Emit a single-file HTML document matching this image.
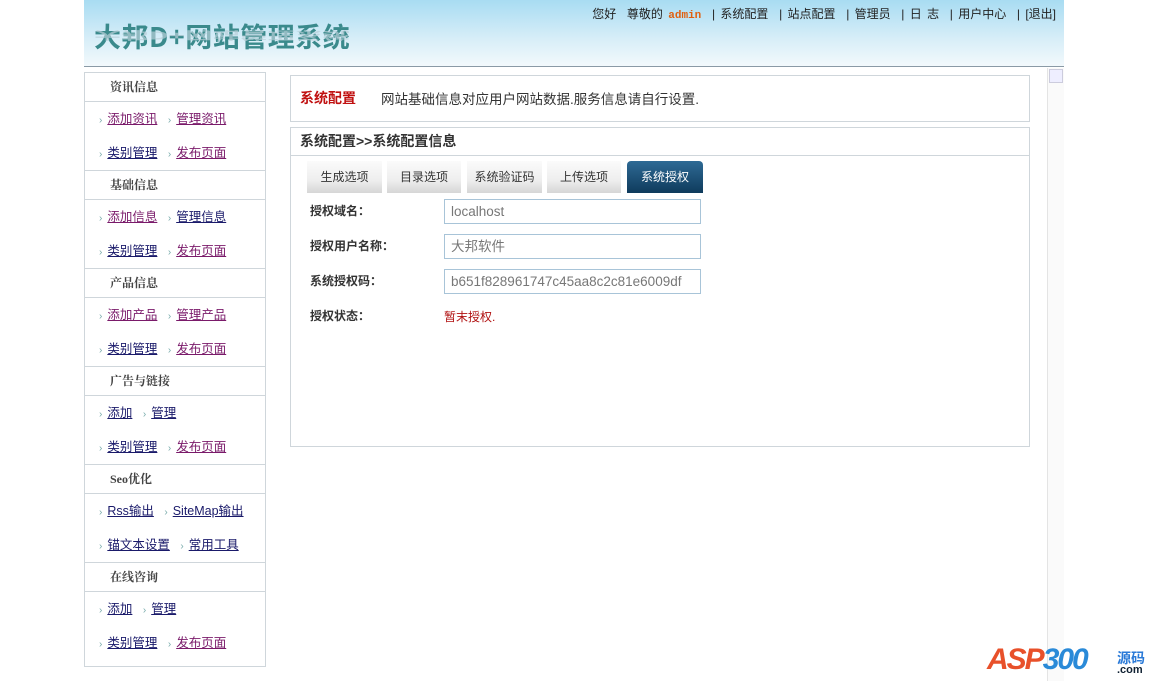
<!DOCTYPE html><html><head><meta charset="utf-8"><style>
*{margin:0;padding:0;box-sizing:border-box}
body{width:1156px;height:681px;background:#fff;font-family:"Liberation Sans","Noto Sans CJK SC",sans-serif;font-size:12px;color:#333;position:relative;overflow:hidden}
.hd{position:absolute;left:84px;top:0;width:980px;height:67px;background:linear-gradient(#a8dcf2,#d8eef8 60%,#f2f9fc);border-bottom:1px solid #8a9aa6}
.logo{position:absolute;left:10px;top:16px;font-size:27px;font-weight:bold;color:#3a8a8c;font-family:"Noto Sans CJK SC",sans-serif;letter-spacing:0.5px}
.refl{position:absolute;left:10px;top:44px;font-size:27px;font-weight:bold;color:#b8cfd8;transform:scaleY(-0.4);transform-origin:top;opacity:.7;font-family:"Noto Sans CJK SC",sans-serif;letter-spacing:0.5px}
.top{position:absolute;right:8px;top:5px;font-size:12px;color:#222;word-spacing:2px}
.top .a{color:#e06010;font-weight:bold;font-family:"Liberation Mono",monospace;font-size:11px}
.side{position:absolute;left:84px;top:72px;width:182px;height:595px;border:1px solid #cfd6db;border-top:none}
.sh{height:30px;line-height:28px;padding-left:25px;font-weight:bold;color:#444;border-top:1px solid #cfd6db;border-bottom:1px solid #cfd6db;font-family:"Liberation Serif","Noto Serif CJK SC",serif}
.sr{height:34px;line-height:34px;padding-left:14px;white-space:nowrap;font-size:12.5px}
.sr a{color:#1a1a6a;text-decoration:underline;margin-right:7px}
.sr a.v{color:#7a1a6a}
.sr i{font-style:normal;color:#7aa;font-size:10px;margin-right:5px}
.box1{position:absolute;left:290px;top:75px;width:740px;height:47px;border:1px solid #cfd6db}
.box1 b{position:absolute;left:9px;top:12px;font-size:14px;color:#c01010}
.box1 span{position:absolute;left:90px;top:12px;font-size:13.5px;color:#333}
.box2{position:absolute;left:290px;top:127px;width:740px;height:320px;border:1px solid #cfd6db}
.t2{height:28px;line-height:27px;padding-left:9px;font-size:14px;font-weight:bold;color:#333;border-bottom:1px solid #cfd6db}
.tab{position:absolute;top:33px;height:32px;line-height:32px;text-align:center;color:#333;background:linear-gradient(#fbfbfb,#eee 60%,#d6d6d6);font-size:12px}
.tab.on{background:linear-gradient(#2e6a95,#0f3b5c);color:#fff;border-radius:4px 4px 0 0}
.lb{position:absolute;left:19px;font-weight:bold;color:#333;font-size:12px}
.in{position:absolute;left:153px;width:257px;height:25px;border:1px solid #a8c4d8;line-height:23px;padding-left:6px;color:#777;font-size:13.5px}
</style></head><body>
<div class="hd"><div class="logo">大邦D+网站管理系统</div><div class="refl">大邦D+网站管理系统</div>
<div class="top">您好 &nbsp;尊敬的 <span class="a">admin</span> &nbsp;| 系统配置 &nbsp;| 站点配置 &nbsp;| 管理员 &nbsp;| 日 志 &nbsp;| 用户中心 &nbsp;| [退出]</div></div>
<div style="position:absolute;left:1047px;top:68px;width:17px;height:613px;border-left:1px solid #e4e4e4;background:#fafafa"><div style="margin:1px;height:14px;border:1px solid #ccd;background:#eef"></div></div>
<div class="side">
<div class="sh">资讯信息</div><div class="sr"><i>›</i><a class="v">添加资讯</a> <i>›</i><a class="v">管理资讯</a></div><div class="sr"><i>›</i><a>类别管理</a> <i>›</i><a class="v">发布页面</a></div>
<div class="sh">基础信息</div><div class="sr"><i>›</i><a class="v">添加信息</a> <i>›</i><a>管理信息</a></div><div class="sr"><i>›</i><a>类别管理</a> <i>›</i><a class="v">发布页面</a></div>
<div class="sh">产品信息</div><div class="sr"><i>›</i><a class="v">添加产品</a> <i>›</i><a class="v">管理产品</a></div><div class="sr"><i>›</i><a>类别管理</a> <i>›</i><a class="v">发布页面</a></div>
<div class="sh">广告与链接</div><div class="sr"><i>›</i><a>添加</a> <i>›</i><a>管理</a></div><div class="sr"><i>›</i><a>类别管理</a> <i>›</i><a class="v">发布页面</a></div>
<div class="sh">Seo优化</div><div class="sr"><i>›</i><a>Rss输出</a> <i>›</i><a>SiteMap输出</a></div><div class="sr"><i>›</i><a>锚文本设置</a> <i>›</i><a>常用工具</a></div>
<div class="sh">在线咨询</div><div class="sr"><i>›</i><a>添加</a> <i>›</i><a>管理</a></div><div class="sr"><i>›</i><a>类别管理</a> <i>›</i><a class="v">发布页面</a></div>
</div>
<div class="box1"><b>系统配置</b><span>网站基础信息对应用户网站数据.服务信息请自行设置.</span></div>
<div class="box2"><div class="t2">系统配置&gt;&gt;系统配置信息</div>
<div class="tab" style="left:16px;width:75px">生成选项</div>
<div class="tab" style="left:96px;width:74px">目录选项</div>
<div class="tab" style="left:176px;width:75px">系统验证码</div>
<div class="tab" style="left:256px;width:74px">上传选项</div>
<div class="tab on" style="left:336px;width:76px">系统授权</div>
<div class="lb" style="top:74px">授权域名：</div><div class="in" style="top:71px">localhost</div>
<div class="lb" style="top:109px">授权用户名称：</div><div class="in" style="top:106px">大邦软件</div>
<div class="lb" style="top:144px">系统授权码：</div><div class="in" style="top:141px">b651f828961747c45aa8c2c81e6009df</div>
<div class="lb" style="top:179px">授权状态：</div><div style="position:absolute;left:153px;top:180px;color:#b01010">暂末授权.</div>
</div>
<div style="position:absolute;left:987px;top:643px;font-size:30px;font-weight:bold;font-style:italic;color:#e8502a;letter-spacing:-2px">ASP<span style="color:#2a8ad8">300</span></div>
<div style="position:absolute;left:1117px;top:648px;font-size:14px;font-weight:bold;color:#2a7ad8">源码</div>
<div style="position:absolute;left:1117px;top:664px;font-size:11px;font-weight:bold;color:#123">.com</div>
</body></html>
